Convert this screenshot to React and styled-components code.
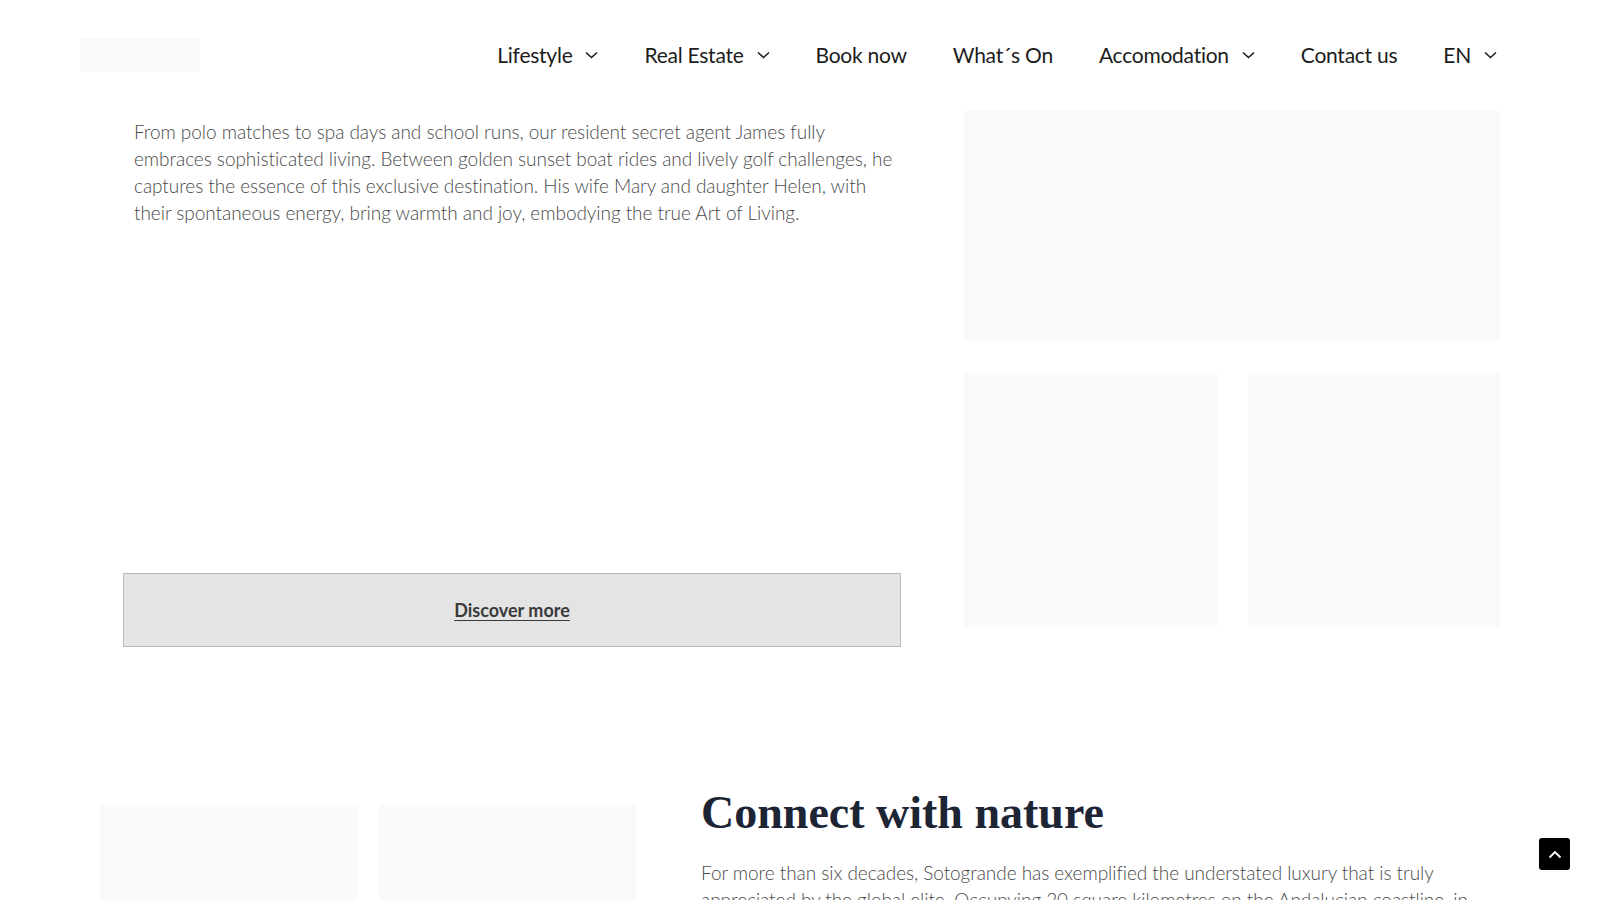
import React from "react";
import styled, { createGlobalStyle } from "styled-components";

const sans = `Lato, "Liberation Sans", sans-serif`;

const GlobalStyle = createGlobalStyle`
  * {
    box-sizing: border-box;
  }
  html,
  body {
    margin: 0;
    padding: 0;
    background: #fff;
  }
  body {
    font-family: ${sans};
    color: #1c1c1c;
    overflow: hidden;
  }
`;

const Chevron = ({ color = "currentColor" }) => (
  <svg width="13" height="8" viewBox="0 0 13 8" fill="none">
    <path d="M1 1.5L6.5 6.5L12 1.5" stroke={color} strokeWidth="1.6" />
  </svg>
);

const navItems = [
  { label: "Lifestyle", menu: true },
  { label: "Real Estate", menu: true },
  { label: "Book now" },
  { label: "What´s On" },
  { label: "Accomodation", menu: true },
  { label: "Contact us" },
  { label: "EN", menu: true },
];

const App = () => {
  return (
    <>
      <GlobalStyle />
      <Header>
        <Logo />
        <Nav>
          {navItems.map(item => (
            <NavItem key={item.label} href="#">
              {item.label}
              {item.menu && <Chevron />}
            </NavItem>
          ))}
        </Nav>
      </Header>

      <Feature>
        <Story>
          <Paragraph>
            From polo matches to spa days and school runs, our resident secret agent James fully
            <br />
            embraces sophisticated living. Between golden sunset boat rides and lively golf challenges, he
            <br />
            captures the essence of this exclusive destination. His wife Mary and daughter Helen, with
            <br />
            their spontaneous energy, bring warmth and joy, embodying the true Art of Living.
          </Paragraph>
          <DiscoverButton href="#">Discover more</DiscoverButton>
        </Story>
        <Mosaic>
          <Tile $wide />
          <Tile />
          <Tile />
        </Mosaic>
      </Feature>

      <Nature>
        <Gallery>
          <GalleryTile />
          <GalleryTile />
        </Gallery>
        <NatureText>
          <Heading>Connect with nature</Heading>
          <Lead>
            For more than six decades, Sotogrande has exemplified the understated luxury that is truly
            <br />
            appreciated by the global elite. Occupying 20 square kilometres on the Andalucian coastline, in
          </Lead>
        </NatureText>
      </Nature>

      <ScrollTop aria-label="Back to top">
        <svg width="14" height="9" viewBox="0 0 14 9" fill="none">
          <path d="M1.5 7.5L7 2L12.5 7.5" stroke="#fff" strokeWidth="1.8" />
        </svg>
      </ScrollTop>
    </>
  );
};

export default App;

const Header = styled.header`
  display: flex;
  align-items: center;
  height: 108px;
  padding: 0 103px 0 80px;
`;

const Logo = styled.div`
  width: 120px;
  height: 34px;
  margin-top: 2px;
  background: #f9fafb;
`;

const Nav = styled.nav`
  margin-left: auto;
  display: flex;
  align-items: center;
  gap: 46px;
`;

const NavItem = styled.a`
  display: flex;
  align-items: center;
  gap: 13px;
  font-size: 21px;
  letter-spacing: -0.25px;
  line-height: 1;
  color: #1c1c1c;
  text-decoration: none;
  white-space: nowrap;
  & svg {
    margin-top: 2px;
  }
`;

const Feature = styled.section`
  display: grid;
  grid-template-columns: 778px 536px;
  column-gap: 63px;
  padding: 2px 100px 0 123px;
`;

const Story = styled.div`
  display: flex;
  flex-direction: column;
`;

const Paragraph = styled.p`
  margin: 0;
  padding: 8px 11px 0;
  font-size: 19px;
  font-weight: 300;
  letter-spacing: -0.05px;
  line-height: 27px;
  color: #4a4a4a;
  white-space: nowrap;
`;

const DiscoverButton = styled.a`
  display: flex;
  align-items: center;
  justify-content: center;
  height: 74px;
  margin-top: 347px;
  background: #e4e4e4;
  border: 1px solid #b9b9b9;
  font-weight: 700;
  font-size: 18px;
  color: #3a3a3a;
  text-decoration: underline;
  text-underline-offset: 3px;
`;

const Mosaic = styled.div`
  display: grid;
  grid-template-columns: 1fr 1fr;
  grid-template-rows: 230px 254px;
  column-gap: 31px;
  row-gap: 33px;
`;

const Tile = styled.div`
  background: #f9fafb;
  grid-column: ${props => (props.$wide ? "1 / span 2" : "auto")};
`;

const Nature = styled.section`
  display: grid;
  grid-template-columns: 536px 1fr;
  column-gap: 65px;
  padding: 141px 100px 0 100px;
`;

const Gallery = styled.div`
  display: grid;
  grid-template-columns: 1fr 1fr;
  column-gap: 21px;
  padding-top: 17px;
`;

const GalleryTile = styled.div`
  height: 320px;
  background: #f9fafb;
`;

const NatureText = styled.div`
  display: flex;
  flex-direction: column;
`;

const Heading = styled.h2`
  margin: 0;
  font-family: "Liberation Serif", "Times New Roman", serif;
  font-weight: 700;
  font-size: 46px;
  line-height: 1.1;
  color: #1d2535;
`;

const Lead = styled.p`
  margin: 20px 0 0;
  font-size: 19px;
  font-weight: 300;
  letter-spacing: -0.05px;
  line-height: 27px;
  color: #4a4a4a;
  white-space: nowrap;
`;

const ScrollTop = styled.button`
  position: fixed;
  right: 30px;
  bottom: 30px;
  width: 31px;
  height: 32px;
  display: flex;
  align-items: center;
  justify-content: center;
  padding: 0;
  border: none;
  border-radius: 3px;
  background: #000;
  cursor: pointer;
`;
